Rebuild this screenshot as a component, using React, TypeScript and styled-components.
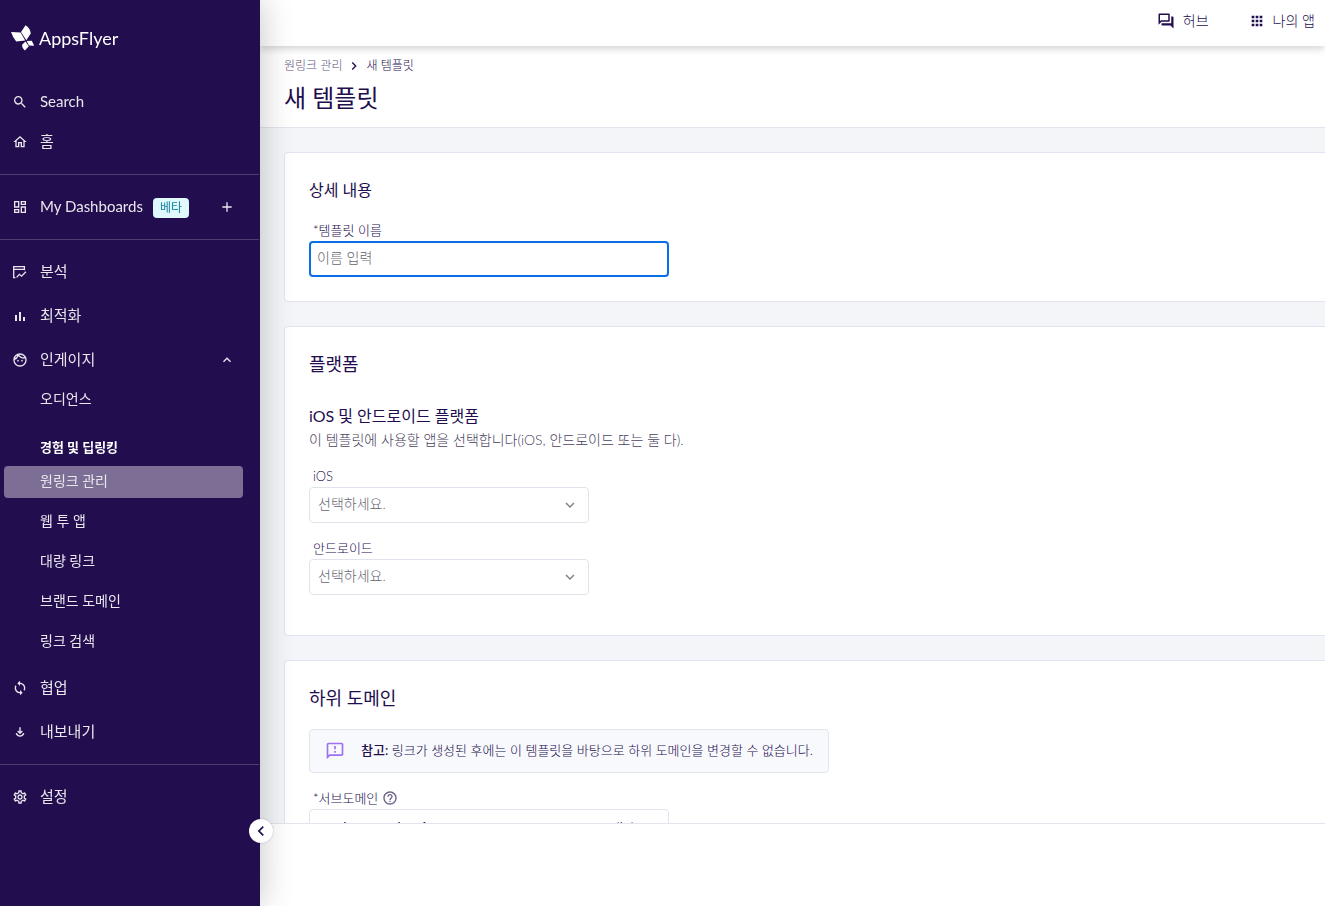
import React from 'react';
import styled, { createGlobalStyle } from 'styled-components';
import {
  MdAdd,
  MdApps,
  MdChevronLeft,
  MdChevronRight,
  MdExpandMore,
  MdHelpOutline,
  MdKeyboardArrowUp,
  MdOutlineDashboard,
  MdOutlineFace,
  MdOutlineFeedback,
  MdOutlineHome,
  MdOutlineQuestionAnswer,
  MdOutlineSettings,
  MdSearch,
  MdSync,
} from 'react-icons/md';

const GlobalStyle = createGlobalStyle`
  *, *::before, *::after { box-sizing: border-box; }
  body {
    margin: 0;
    background: #fff;
    color: #220d4e;
    font-family: Lato, 'Noto Sans CJK KR', sans-serif;
    font-size: 14px;
    line-height: 20px;
  }
  button, input, select { font: inherit; color: inherit; }
  h1, h2, h3 { margin: 0; font-weight: 400; }
  p, ul { margin: 0; padding: 0; }
  ul { list-style: none; }
  a { color: inherit; text-decoration: none; }
`;

const Shell = styled.div`
  display: grid;
  grid-template-columns: 260px minmax(0, 1fr);
  height: 100vh;
  overflow: hidden;
`;

const Sidebar = styled.aside`
  position: relative;
  z-index: 2;
  background: #220d4e;
  color: #e9e6ee;
  box-shadow: 0 0 32px rgba(0, 0, 0, 0.24);
`;

const LogoLink = styled.a`
  display: flex;
  align-items: center;
  gap: 4px;
  height: 82px;
  padding: 0 0 6px 11px;
  color: #fff;
  font-size: 18px;
  line-height: 24px;
`;

const NavGroup = styled.ul<{ $spaced?: boolean }>`
  display: flex;
  flex-direction: column;
  gap: ${(p) => (p.$spaced ? '4px' : '0')};
  padding: 0 17px 0 4px;
`;

const Divider = styled.hr`
  height: 1px;
  margin: 12px 1px 12px 0;
  border: 0;
  background: #4e3d71;
`;

const NavRow = styled.div`
  display: flex;
  align-items: center;
  height: 40px;
  padding: 0 8px;
`;

const NavLink = styled.a`
  display: flex;
  flex: 1;
  align-items: center;
  gap: 12px;
  font-size: 15px;
`;

const NavText = styled.span`
  padding-bottom: 2px;
`;

const Badge = styled.span`
  margin: 2px 0 0 -2px;
  padding: 0 7px;
  border-radius: 4px;
  background: #e0f9fd;
  color: #17829c;
  font-size: 12px;
  line-height: 20px;
`;

const RowButton = styled.button`
  display: flex;
  padding: 0;
  border: 0;
  background: none;
`;

const SubList = styled.ul`
  padding-bottom: 2px;
`;

const SubItem = styled.li`
  padding: 4px 0;
`;

const SubLink = styled.a<{ $active?: boolean }>`
  display: block;
  padding: 0 36px 2px;
  border-radius: 4px;
  background: ${(p) => (p.$active ? '#7c6e94' : 'transparent')};
  line-height: 30px;
`;

const SubHeading = styled.li`
  padding: 13px 36px 1px;
  color: #fff;
  font-size: 13px;
  font-weight: 700;
  line-height: 28px;
`;

const Collapse = styled.button`
  position: absolute;
  right: -13px;
  bottom: 63px;
  display: flex;
  align-items: center;
  justify-content: center;
  width: 24px;
  height: 24px;
  padding: 0;
  border: 0;
  border-radius: 50%;
  background: #fff;
  color: #220d4e;
  box-shadow: 0 0 2px rgba(34, 13, 78, 0.3);
`;

const Page = styled.div`
  display: flex;
  flex-direction: column;
  min-height: 0;
`;

const TopBar = styled.header`
  position: relative;
  z-index: 1;
  display: flex;
  align-items: center;
  justify-content: flex-end;
  gap: 40px;
  height: 46px;
  padding: 0 10px 4px;
  background: #fff;
  box-shadow: 0 2px 8px rgba(0, 0, 0, 0.2);
`;

const TopLink = styled.a`
  display: flex;
  align-items: center;
  gap: 8px;
  font-weight: 300;
`;

const PageHead = styled.div`
  padding: 10px 24px 11px;
  border-bottom: 1px solid #e2e5ec;
`;

const Crumbs = styled.nav`
  display: flex;
  align-items: center;
  gap: 4px;
  font-size: 12px;
  font-weight: 300;
`;

const CrumbLink = styled.a`
  color: #5b4f7c;
`;

const PageTitle = styled.h1`
  margin-top: 4px;
  font-size: 24px;
  line-height: 36px;
`;

const Content = styled.main`
  display: flex;
  flex: 1;
  flex-direction: column;
  gap: 24px;
  min-height: 0;
  padding: 24px 0 0 24px;
  overflow: auto;
  scrollbar-width: none;
  background: #f4f5f8;
`;

const Card = styled.section<{ $roomy?: boolean }>`
  flex: none;
  padding: 24px 24px ${(p) => (p.$roomy ? '40px' : '24px')};
  border: 1px solid #e2e5ef;
  border-right: 0;
  border-radius: 4px 0 0 4px;
  background: #fff;
`;

const CardTitle = styled.h2<{ $size: number }>`
  font-size: ${(p) => p.$size}px;
  line-height: 26px;
`;

const SubTitle = styled.h3`
  margin-top: 27px;
  font-size: 16px;
  line-height: 24px;
`;

const Description = styled.p`
  color: #4a4260;
  font-weight: 300;
  line-height: 24px;
`;

const Field = styled.div<{ $gap: number; $width: number }>`
  width: ${(p) => p.$width}px;
  max-width: 100%;
  margin-top: ${(p) => p.$gap}px;
`;

const Label = styled.label`
  display: flex;
  align-items: center;
  gap: 4px;
  padding: 0 0 2px 4px;
  font-size: 13px;
  font-weight: 300;
  line-height: 18px;
`;

const TextInput = styled.input`
  display: block;
  width: 100%;
  height: 36px;
  padding: 0 6px 4px;
  border: 2px solid #0a6ee6;
  border-radius: 4px;
  outline: 0;
  background: #fff;
  font-weight: 300;
  &::placeholder { color: #66666f; opacity: 1; }
`;

const SelectBox = styled.div`
  display: grid;
  align-items: center;
  color: #828282;
  > * { grid-area: 1 / 1; }
  > svg { justify-self: end; margin-right: 10px; pointer-events: none; }
`;

const Select = styled.select`
  width: 100%;
  height: 36px;
  padding: 0 32px 2px 8px;
  border: 1px solid #e2e2ec;
  border-radius: 4px;
  appearance: none;
  background: #fff;
  color: #666672;
  font-weight: 300;
`;

const Note = styled.div`
  display: flex;
  align-items: center;
  gap: 16px;
  width: fit-content;
  height: 44px;
  margin-top: 18px;
  padding: 0 15px;
  border: 1px solid #e2e5ec;
  border-radius: 4px;
  background: #f8f9fc;
  font-size: 13px;
  font-weight: 300;
  p { padding-bottom: 2px; }
  b { font-weight: 500; }
`;

const DomainBox = styled.div`
  display: flex;
  align-items: center;
  height: 36px;
  padding: 0 9px 0 7px;
  border: 1px solid #e2e2ec;
  border-radius: 4px;
  font-weight: 300;
  input {
    flex: 1;
    min-width: 0;
    padding: 0;
    border: 0;
    outline: 0;
    background: none;
    font-weight: 400;
  }
`;

const Footer = styled.footer`
  flex: none;
  height: 83px;
  border-top: 1px solid #e2e5ec;
  background: #fff;
`;

function LogoMark() {
  return (
    <svg width="24" height="26" viewBox="0 0 24 26" fill="currentColor" aria-hidden="true">
      <path d="M14.6 0.2Q19.6 3.6 19.7 8.6L15.3 15.2L10 7Z" />
      <path d="M0 7L9.6 7.6L14.2 15.6L5.2 16.4Q2 13 0 7Z" />
      <path d="M15.6 15.9L20.8 15.8L23.2 20.7L18 20.6Z" />
      <path d="M14.5 16.6L17.8 21.2L13.9 25.6Q10.8 23 11 19.8Z" />
    </svg>
  );
}

function AnalyzeIcon() {
  return (
    <svg width="16" height="16" viewBox="0 0 16 16" fill="none" stroke="currentColor" strokeWidth="1.3" aria-hidden="true">
      <path d="M3.4 13.6H1.7V2.6H12.4V6.2M1.7 5.4H12.4" />
      <path d="M4.6 13.4L7.4 10.3L9.6 12.2L13.9 7.8" />
    </svg>
  );
}

function BarsIcon() {
  return (
    <svg width="16" height="16" viewBox="0 0 16 16" fill="currentColor" aria-hidden="true">
      <path d="M3 7h2v6H3zM7 4h2v9H7zM11 9h2v4h-2z" />
    </svg>
  );
}

function ExportIcon() {
  return (
    <svg width="16" height="16" viewBox="0 0 16 16" fill="none" stroke="currentColor" strokeWidth="1.4" aria-hidden="true">
      <path d="M8 3.2V9M5.7 7L8 9.3L10.3 7" />
      <path d="M4.3 9.2A3.8 3.8 0 0 0 11.7 9.2" />
    </svg>
  );
}

interface NavItemProps {
  icon: React.ReactNode;
  label: string;
  badge?: string;
  action?: React.ReactNode;
  children?: React.ReactNode;
}

function NavItem({ icon, label, badge, action, children }: NavItemProps) {
  return (
    <li>
      <NavRow>
        <NavLink href="#">
          {icon}
          <NavText>{label}</NavText>
          {badge && <Badge>{badge}</Badge>}
        </NavLink>
        {action}
      </NavRow>
      {children}
    </li>
  );
}

const linkPages = ['원링크 관리', '웹 투 앱', '대량 링크', '브랜드 도메인', '링크 검색'];

function AppSelect({ id, label, gap }: { id: string; label: string; gap: number }) {
  return (
    <Field $gap={gap} $width={280}>
      <Label htmlFor={id}>{label}</Label>
      <SelectBox>
        <Select id={id}>
          <option>선택하세요.</option>
        </Select>
        <MdExpandMore size={18} />
      </SelectBox>
    </Field>
  );
}

export default function App() {
  return (
    <>
      <GlobalStyle />
      <Shell>
        <Sidebar>
          <LogoLink href="#">
            <LogoMark />
            AppsFlyer
          </LogoLink>
          <nav>
            <NavGroup>
              <NavItem icon={<MdSearch size={16} />} label="Search" />
              <NavItem icon={<MdOutlineHome size={16} />} label="홈" />
            </NavGroup>
            <Divider />
            <NavGroup>
              <NavItem
                icon={<MdOutlineDashboard size={16} />}
                label="My Dashboards"
                badge="베타"
                action={
                  <RowButton aria-label="대시보드 추가">
                    <MdAdd size={16} />
                  </RowButton>
                }
              />
            </NavGroup>
            <Divider />
            <NavGroup $spaced>
              <NavItem icon={<AnalyzeIcon />} label="분석" />
              <NavItem icon={<BarsIcon />} label="최적화" />
              <NavItem
                icon={<MdOutlineFace size={16} />}
                label="인게이지"
                action={
                  <RowButton aria-label="접기">
                    <MdKeyboardArrowUp size={16} />
                  </RowButton>
                }
              >
                <SubList>
                  <SubItem>
                    <SubLink href="#">오디언스</SubLink>
                  </SubItem>
                  <SubHeading>경험 및 딥링킹</SubHeading>
                  {linkPages.map((page, i) => (
                    <SubItem key={page}>
                      <SubLink href="#" $active={i === 0}>
                        {page}
                      </SubLink>
                    </SubItem>
                  ))}
                </SubList>
              </NavItem>
              <NavItem icon={<MdSync size={16} />} label="협업" />
              <NavItem icon={<ExportIcon />} label="내보내기" />
            </NavGroup>
            <Divider />
            <NavGroup>
              <NavItem icon={<MdOutlineSettings size={16} />} label="설정" />
            </NavGroup>
          </nav>
          <Collapse aria-label="사이드바 접기">
            <MdChevronLeft size={20} />
          </Collapse>
        </Sidebar>

        <Page>
          <TopBar>
            <TopLink href="#">
              <MdOutlineQuestionAnswer size={18} />
              허브
            </TopLink>
            <TopLink href="#">
              <MdApps size={16} />
              나의 앱
            </TopLink>
          </TopBar>
          <PageHead>
            <Crumbs>
              <CrumbLink href="#">원링크 관리</CrumbLink>
              <MdChevronRight size={16} />
              <span>새 템플릿</span>
            </Crumbs>
            <PageTitle>새 템플릿</PageTitle>
          </PageHead>
          <Content>
            <Card>
              <CardTitle $size={16}>상세 내용</CardTitle>
              <Field $gap={18} $width={360}>
                <Label htmlFor="template-name">*템플릿 이름</Label>
                <TextInput id="template-name" placeholder="이름 입력" />
              </Field>
            </Card>
            <Card $roomy>
              <CardTitle $size={18}>플랫폼</CardTitle>
              <SubTitle>iOS 및 안드로이드 플랫폼</SubTitle>
              <Description>이 템플릿에 사용할 앱을 선택합니다(iOS, 안드로이드 또는 둘 다).</Description>
              <AppSelect id="ios-app" label="iOS" gap={15} />
              <AppSelect id="android-app" label="안드로이드" gap={16} />
            </Card>
            <Card>
              <CardTitle $size={18}>하위 도메인</CardTitle>
              <Note>
                <MdOutlineFeedback size={20} color="#9b72f2" />
                <p>
                  <b>참고:</b> 링크가 생성된 후에는 이 템플릿을 바탕으로 하위 도메인을 변경할 수 없습니다.
                </p>
              </Note>
              <Field $gap={16} $width={360}>
                <Label htmlFor="subdomain">
                  *서브도메인
                  <MdHelpOutline size={16} color="#6b5f86" />
                </Label>
                <DomainBox>
                  <input id="subdomain" defaultValue="newbrowserdom1" />
                  <span>.onelink.me</span>
                </DomainBox>
              </Field>
            </Card>
          </Content>
          <Footer />
        </Page>
      </Shell>
    </>
  );
}
